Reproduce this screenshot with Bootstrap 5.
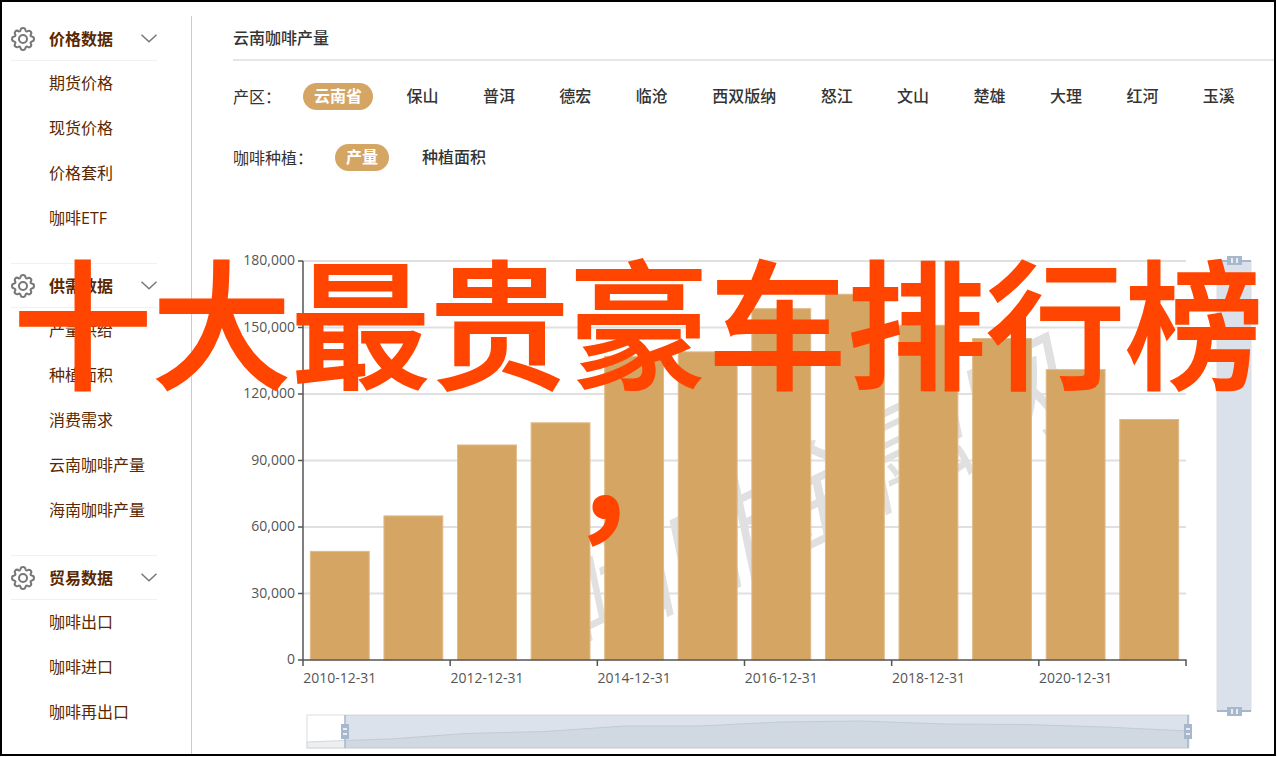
<!DOCTYPE html>
<html lang="zh-CN">
<head>
<meta charset="utf-8">
<meta name="viewport" content="width=device-width, initial-scale=1">
<title>云南咖啡产量</title>
<link href="https://cdn.jsdelivr.net/npm/bootstrap@5.3.0/dist/css/bootstrap.min.css" rel="stylesheet">
<style>
  body { font-family: "Open Sans", "Noto Sans CJK SC", sans-serif; font-size: 16px; line-height: 24px; color: #333; background: #fff; }
  .frame { border: 2px solid #000; margin: 0 1px 1px 0; min-height: calc(100vh - 1px); padding-top: 14px; }
  .side { width: 190px; padding-left: 9px; padding-right: 34px; border-right: 1px solid #ccc; }
  .side-group { margin-bottom: 22px; }
  .side-head { height: 45px; border: 0; border-top: 1px solid #eff1f3; border-bottom: 1px solid #eff1f3; background: none; color: #5a2800; font-weight: 700; }
  .side-group:first-child .side-head { border-top-color: transparent; }
  .side-head .name { margin-left: 14px; }
  .side-link { display: block; height: 45px; line-height: 45px; padding-left: 38px; color: #5a2800; text-decoration: none; white-space: nowrap; }
  .content { padding-left: 41px; min-width: 0; }
  .page-title { height: 45px; font-size: 16px; line-height: 24px; font-weight: 500; border-bottom: 2px solid #e5e5e5; margin-bottom: 5px; }
  .filter { height: 61px; gap: 22px; white-space: nowrap; }
  .filter-spread { padding-right: 28px; }
  .pill { border: 0; background: none; border-radius: 14px; height: 27px; line-height: 27px; padding: 0 11px; font-weight: 500; color: #333; }
  .pill.active { background: #d5a564; color: #fff; font-weight: 700; }
  .chart text { font-family: "Open Sans", "Noto Sans CJK SC", sans-serif; font-size: 14px; fill: #555; }
  .chart .watermark { font-size: 110px; font-style: italic; fill: #e0e0e0; }
  .banner { position: absolute; top: 243px; left: 0; right: 0; font-family: "Noto Sans CJK SC", sans-serif; font-size: 139px; line-height: 150px; font-weight: 500; color: #ff4500; -webkit-text-stroke: 2px #ff4500; line-break: anywhere; pointer-events: none; }
</style>
</head>
<body>
<svg class="d-none" xmlns="http://www.w3.org/2000/svg">
  <symbol id="gear" viewBox="0 0 24 24">
    <g fill="none" stroke="#777" stroke-width="2" stroke-linejoin="round">
      <path d="M9.500 3.200Q9.800 1 12 1T14.500 3.200Q14.800 4.600 16 4.500Q18 3 19.600 4.400T19.500 8Q19.400 9.200 20.800 9.500Q23 9.800 23 12T20.800 14.500Q19.400 14.800 19.500 16Q21 18 19.600 19.600T16 19.500Q14.800 19.400 14.500 20.800Q14.200 23 12 23T9.500 20.800Q9.200 19.400 8 19.500Q6 21 4.400 19.600T4.500 16Q4.600 14.800 3.200 14.500Q1 14.200 1 12T3.200 9.500Q4.600 9.200 4.500 8Q3 6 4.400 4.400T8 4.500Q9.200 4.600 9.500 3.200Z"/>
      <circle cx="12" cy="12" r="4"/>
    </g>
  </symbol>
  <symbol id="chevron" viewBox="0 0 16 9">
    <path d="M.5 .7L8 7.7L15.500 .7" fill="none" stroke="#777" stroke-width="1.5"/>
  </symbol>
</svg>

<div class="frame d-flex">
  <nav class="side flex-shrink-0">
    <section class="side-group">
      <button type="button" class="side-head d-flex align-items-center w-100 p-0">
        <svg width="24" height="24"><use href="#gear"/></svg><span class="name">价格数据</span><svg class="ms-auto" width="16" height="9"><use href="#chevron"/></svg>
      </button>
      <a class="side-link" href="#">期货价格</a>
      <a class="side-link" href="#">现货价格</a>
      <a class="side-link" href="#">价格套利</a>
      <a class="side-link" href="#">咖啡ETF</a>
    </section>
    <section class="side-group">
      <button type="button" class="side-head d-flex align-items-center w-100 p-0">
        <svg width="24" height="24"><use href="#gear"/></svg><span class="name">供需数据</span><svg class="ms-auto" width="16" height="9"><use href="#chevron"/></svg>
      </button>
      <a class="side-link" href="#">产量供给</a>
      <a class="side-link" href="#">种植面积</a>
      <a class="side-link" href="#">消费需求</a>
      <a class="side-link" href="#">云南咖啡产量</a>
      <a class="side-link" href="#">海南咖啡产量</a>
    </section>
    <section class="side-group mb-0">
      <button type="button" class="side-head d-flex align-items-center w-100 p-0">
        <svg width="24" height="24"><use href="#gear"/></svg><span class="name">贸易数据</span><svg class="ms-auto" width="16" height="9"><use href="#chevron"/></svg>
      </button>
      <a class="side-link" href="#">咖啡出口</a>
      <a class="side-link" href="#">咖啡进口</a>
      <a class="side-link" href="#">咖啡再出口</a>
    </section>
  </nav>

  <main class="content flex-grow-1">
    <h1 class="page-title d-flex align-items-center">云南咖啡产量</h1>
    <div class="filter filter-spread d-flex align-items-center">
      <span>产区：</span>
      <div class="d-flex flex-grow-1 justify-content-between">
        <button type="button" class="pill active">云南省</button>
        <button type="button" class="pill">保山</button>
        <button type="button" class="pill">普洱</button>
        <button type="button" class="pill">德宏</button>
        <button type="button" class="pill">临沧</button>
        <button type="button" class="pill">西双版纳</button>
        <button type="button" class="pill">怒江</button>
        <button type="button" class="pill">文山</button>
        <button type="button" class="pill">楚雄</button>
        <button type="button" class="pill">大理</button>
        <button type="button" class="pill">红河</button>
        <button type="button" class="pill">玉溪</button>
      </div>
    </div>
    <div class="filter d-flex align-items-center">
      <span>咖啡种植：</span>
      <button type="button" class="pill active">产量</button>
      <button type="button" class="pill">种植面积</button>
    </div>

    <svg class="chart d-block w-100" viewBox="0 0 1041 566" role="img" aria-label="云南咖啡产量">
      <g id="grid"></g>
      <text class="watermark" transform="translate(348 467) rotate(-26)">咖啡金融网</text>
      <g id="bars" fill="#d5a564" stroke="#dfba87" stroke-width="1"></g>
      <g id="axis" stroke="#555" stroke-width="1.5"></g>
      <g id="labels"></g>

      <!-- horizontal zoom slider -->
      <rect x="74" y="527" width="882" height="33" fill="#fff" stroke="#ddd"/>
      <path d="M74 554L112 552.500L157 551L232 545.500L312 543.500L392 538L467 538L547 534L627 533L712 536L792 536.500L872 539L955 543V560H74Z" fill="#eceef0" stroke="#d5d8dc"/>
      <rect x="112" y="527" width="843" height="33" fill="#a7b7cc" fill-opacity=".4"/>
      <path d="M112 527V560M955 527V560" stroke="#a7b7cc" stroke-width="1.5"/>
      <g fill="#a7b7cc"><rect x="108" y="536" width="8" height="15"/><rect x="951" y="536" width="8" height="15"/></g>
      <path d="M110 541H114M110 546H114M953 541H957M953 546H957" stroke="#fff" stroke-width="1.500"/>

      <!-- vertical zoom slider -->
      <rect x="984" y="73" width="34" height="450" fill="#dbe1eb" stroke="#ddd"/>
      <path d="M984 73H1018M984 523H1018" stroke="#a7b7cc" stroke-width="2"/>
      <g fill="#a7b7cc"><rect x="994" y="68" width="15" height="9"/><rect x="994" y="519" width="15" height="9"/></g>
      <path d="M999 70V75M1004 70V75M999 521V526M1004 521V526" stroke="#fff" stroke-width="1.500"/>
    </svg>
  </main>
</div>

<div class="banner text-center">十大最贵豪车排行榜，</div>

<script src="https://cdn.jsdelivr.net/npm/bootstrap@5.3.0/dist/js/bootstrap.bundle.min.js"></script>
<script>
  // yearly output in tonnes, 2010 to 2021
  const output = [49000, 65000, 97000, 107000, 137000, 139000, 158500, 165000, 151000, 145000, 131000, 108500];
  const left = 70, right = 953, base = 472, tall = 399, max = 180000;
  const step = (right - left) / output.length;
  const put = (id, html) => document.getElementById(id).innerHTML = html;
  let grid = '', axis = '', labels = '', bars = '';
  for (let v = 0; v <= max; v += 30000) {
    const y = base - v / max * tall;
    if (v) grid += `<path d="M${left} ${y}H${right}" stroke="#e0e0e0" stroke-width="2"/>`;
    axis += `<path d="M${left - 5} ${y}H${left}"/>`;
    labels += `<text x="${left - 8}" y="${y + 4}" text-anchor="end">${v.toLocaleString('en-US')}</text>`;
  }
  output.forEach((v, i) => {
    const h = v / max * tall, x = left + i * step;
    bars += `<rect x="${x + step * 0.1}" y="${base - h}" width="${step * 0.8}" height="${h}"/>`;
    if (i % 2 === 0) {
      axis += `<path d="M${x} ${base}V${base + 6}"/>`;
      labels += `<text x="${x + step / 2}" y="${base + 23}" text-anchor="middle">${2010 + i}-12-31</text>`;
    }
  });
  axis += `<path d="M${left} ${base - tall}V${base}H${right}V${base + 6}" fill="none"/>`;
  put('grid', grid); put('bars', bars); put('axis', axis); put('labels', labels);
</script>
</body>
</html>
